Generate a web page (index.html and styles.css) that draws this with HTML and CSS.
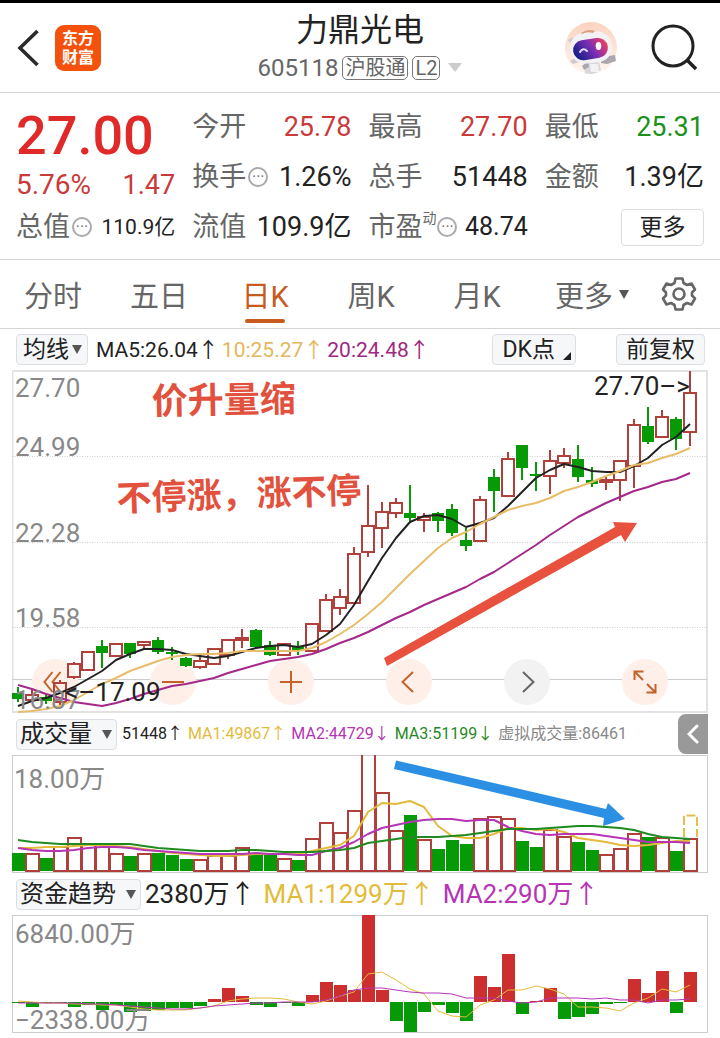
FILE: index.html
```html
<!DOCTYPE html>
<html lang="zh-CN">
<head>
<meta charset="utf-8">
<meta name="viewport" content="width=device-width, initial-scale=1">
<title>力鼎光电 605118</title>
<link rel="stylesheet" href="styles.css">
</head>
<body>
<header class="top">
  <div class="top-left">
    <button class="bare" aria-label="返回"><svg width="24" height="38" viewBox="0 0 24 38"><path d="M21.500 2 4 19l17.500 17" fill="none" stroke="#2b2b2b" stroke-width="3.600"/></svg></button>
    <a class="logo" href="#"><span>东方</span><span>财富</span></a>
  </div>
  <div class="top-title">
    <h1>力鼎光电</h1>
    <div class="code"><span>605118</span><span class="tag">沪股通</span><span class="tag">L2</span><i class="caret caret-light"></i></div>
  </div>
  <div class="top-right">
    <button class="bare" aria-label="智能助手">
      <svg width="54" height="54" viewBox="0 0 54 54">
        <defs>
          <linearGradient id="visor" x1="0" x2="1" y1="0.300" y2="0"><stop offset="0" stop-color="#20208c"/><stop offset=".45" stop-color="#7b2fb4"/><stop offset=".8" stop-color="#d83a72"/><stop offset="1" stop-color="#e8583f"/></linearGradient>
          <linearGradient id="halo" x1="0" x2="0" y1="0" y2="1"><stop offset="0" stop-color="#fbd3bf"/><stop offset="1" stop-color="#fff6f1"/></linearGradient>
        </defs>
        <circle cx="27" cy="27" r="26" fill="url(#halo)"/>
        <path d="M20 41q7-4 15 0l2 8q-8 6-16 3z" fill="#d9d7dc"/>
        <path d="M18 45l6-5 1 6-5 3zM37 39l8-4 6-1 1 6-9 3-6-1z" fill="#aaa8ae"/>
        <path d="M26 43h8l1 8h-8z" fill="#f2f1f3"/>
        <path d="M4 19l5-3-1 8zM6 40l6-4 3 5-6 2z" fill="#cfccd1"/>
        <rect x="6" y="11" width="42" height="31" rx="15" fill="#f3f1f4" transform="rotate(-7 27 27)"/>
        <path d="M17 12q7-5 14-2l-2 2q-6-2-11 1z" fill="#d9a07e"/>
        <rect x="9" y="18" width="35" height="20" rx="10" fill="url(#visor)" transform="rotate(-9 27 28)"/>
        <path d="M16 31q3-5 7-1" fill="none" stroke="#e9dcff" stroke-width="2" stroke-linecap="round"/>
        <ellipse cx="34.500" cy="25" rx="2.800" ry="4" fill="#fff"/>
      </svg>
    </button>
    <button class="bare" aria-label="搜索"><svg width="48" height="48" viewBox="0 0 48 48"><g fill="none" stroke="#222" stroke-width="3"><circle cx="22" cy="22" r="20"/><path d="M36 36l9 9" stroke-width="3.500"/></g></svg></button>
  </div>
</header>

<section class="quote">
  <div class="quote-main">
    <strong class="price">27.00</strong>
    <div class="change"><span class="percent">5.76%</span><span>1.47</span></div>
    <div class="item"><span class="name">总值<i class="info">···</i></span><span class="small">110.9亿</span></div>
  </div>
  <div class="quote-grid">
    <div class="item"><span class="name">今开</span><span class="up">25.78</span></div>
    <div class="item"><span class="name">最高</span><span class="up">27.70</span></div>
    <div class="item"><span class="name">最低</span><span class="down">25.31</span></div>
    <div class="item"><span class="name">换手<i class="info">···</i></span><span>1.26%</span></div>
    <div class="item"><span class="name">总手</span><span>51448</span></div>
    <div class="item"><span class="name">金额</span><span>1.39亿</span></div>
    <div class="item"><span class="name">流值</span><span>109.9亿</span></div>
    <div class="item"><span class="name">市盈<sup>动</sup><i class="info">···</i></span><span class="mid">48.74</span></div>
    <div class="item item-end"><button class="more">更多</button></div>
  </div>
</section>

<nav class="tabs">
  <button>分时</button>
  <button>五日</button>
  <button class="on">日K</button>
  <button>周K</button>
  <button>月K</button>
  <button class="tab-more">更多<i class="caret caret-small"></i></button>
  <button class="tab-gear" aria-label="设置"><svg width="36" height="36" viewBox="0 0 36 36"><g fill="none" stroke="#666" stroke-width="2.600" stroke-linejoin="round"><path d="M14.500 2.500h7l1 4.500 3.500 2 4.500-1.500 3.500 6-3 3v3l3 3-3.500 6-4.500-1.500-3.500 2-1 4.500h-7l-1-4.500-3.500-2L5.500 28.500 2 22.500l3-3v-3l-3-3 3.500-6L10 9l3.500-2z"/><circle cx="18" cy="18" r="5.500"/></g></svg></button>
</nav>

<main class="charts">
  <div class="bar bar-first">
    <button class="chip">均线<i class="caret caret-small"></i></button>
    <div class="values ma">
      <span>MA5:26.04↑</span><span class="gold">10:25.27↑</span><span class="plum">20:24.48↑</span>
    </div>
    <div class="bar-right">
      <button class="chip chip-dk">DK点<i class="corner"></i></button>
      <button class="chip">前复权</button>
    </div>
  </div>

  <div class="kline">
    <svg class="layer" viewBox="12 370 696 343" aria-hidden="true">
      <rect x="12.500" y="371" width="694.500" height="341" fill="none" stroke="#e2e2e2" stroke-width="2"/>
      <path d="M12 456.500H707M12 542.500H707M12 627.500H707" stroke="#ccc" stroke-dasharray="1 1.500"/>
      <path d="M12 679.500H707" stroke="#ccc"/>
    </svg>
    <div class="tools">
      <button aria-label="最左"><svg viewBox="0 0 46 46"><path d="M20.500 13l-8 10 8 10M28.500 13l-8 10 8 10"/></svg></button>
      <button aria-label="缩小"><svg viewBox="0 0 46 46"><path d="M12 23h22"/></svg></button>
      <button aria-label="放大"><svg viewBox="0 0 46 46"><path d="M12 23h22M23 12v22"/></svg></button>
      <button aria-label="向左"><svg viewBox="0 0 46 46"><path d="M27 13L16.500 23 27 33"/></svg></button>
      <button class="off" aria-label="向右"><svg viewBox="0 0 46 46"><path d="M19 13l10.500 10L19 33"/></svg></button>
      <button aria-label="全屏"><svg viewBox="0 0 46 46"><path d="M12.500 21v-8.500h9M13 13l8 8M33.500 25v8.500h-9M33 33l-8-8"/></svg></button>
    </div>
    <svg class="layer layer-front" viewBox="12 370 696 343">
      <g id="candles"></g>
      <g class="scale">
        <text x="15" y="397">27.70</text>
        <text x="15" y="456">24.99</text>
        <text x="15" y="542">22.28</text>
        <text x="15" y="627">19.58</text>
        <text x="15" y="709">16.87</text>
      </g>
      <g class="mark">
        <text x="594" y="395">27.70–&gt;</text>
        <text x="65" y="701">&lt;–17.09</text>
      </g>
      <path d="M384 658L615 527l-2-5 24 1-12 19-4-7L387 666z" fill="#e8513d"/>
      <g class="note">
        <text transform="translate(152 414) rotate(-1)">价升量缩</text>
        <text transform="translate(117 511) rotate(-2)">不停涨，涨不停</text>
      </g>
    </svg>
  </div>

  <div class="bar">
    <button class="chip chip-flat">成交量<i class="caret caret-small"></i></button>
    <div class="values narrow">
      <span>51448↑</span><span class="yellow">MA1:49867↑</span><span class="violet">MA2:44729↓</span><span class="green">MA3:51199↓</span><span class="gray">虚拟成交量:86461</span>
    </div>
    <button class="drawer" aria-label="展开"><svg width="12" height="20" viewBox="0 0 12 20"><path d="M10 2L2 10l8 8" fill="none" stroke="#fff" stroke-width="3" stroke-linecap="round"/></svg></button>
  </div>
  <svg class="pane" viewBox="12 755 696 118">
    <rect x="12.500" y="755.500" width="695" height="117" fill="#fff" stroke="#ccc"/>
    <g id="volume"></g>
    <g class="scale"><text x="14" y="788">18.00万</text></g>
    <path d="M684 837v-21.500h13V837" fill="none" stroke="#e2c04a" stroke-width="2" stroke-dasharray="9 3"/>
    <path d="M396 760.500L606 809l2-6 17 16-22 7 1-8-210-49z" fill="#2b8fe3"/>
  </svg>

  <div class="bar">
    <button class="chip chip-flat">资金趋势<i class="caret caret-small"></i></button>
    <div class="values large">
      <span>2380万↑</span><span class="yellow">MA1:1299万↑</span><span class="violet">MA2:290万↑</span>
    </div>
  </div>
  <svg class="pane" viewBox="12 915 696 118">
    <rect x="12.500" y="915.500" width="695" height="117" fill="#fff" stroke="#ccc"/>
    <g id="fund"></g>
    <g class="scale"><text x="15" y="943">6840.00万</text><text x="15" y="1029">−2338.00万</text></g>
  </svg>
</main>
<script src="charts.js"></script>
</body>
</html>
```
FILE: styles.css
```css
* { box-sizing: border-box; }
body {
  margin: 0;
  background: #fff;
  color: #222;
  border-top: 3px solid #000;
  font-family: Roboto, "Noto Sans CJK SC", sans-serif;
}
button {
  font: inherit;
  color: inherit;
  background: none;
  border: 0;
  padding: 0;
  margin: 0;
}
svg { display: block; }
i { font-style: normal; }

.top {
  display: grid;
  grid-template-columns: 1fr auto 1fr;
  align-items: center;
  height: 90px;
  padding: 0 16px;
  border-bottom: 1px solid #d4d4d4;
}
.top-left, .top-right { display: flex; align-items: center; }
.top-left { gap: 15px; }
.top-right { justify-content: flex-end; gap: 33px; padding-right: 5px; }
.logo {
  display: flex;
  flex-direction: column;
  align-items: center;
  justify-content: center;
  width: 46px;
  height: 46px;
  border-radius: 9px;
  background: #f4520c;
  color: #fff;
  font-size: 16px;
  line-height: 19px;
  font-weight: 700;
  text-decoration: none;
}
.top-title { text-align: center; }
h1 { margin: 0; font-size: 32px; line-height: 40px; font-weight: 400; }
.code {
  display: flex;
  align-items: center;
  justify-content: center;
  gap: 4px;
  font-size: 24px;
  line-height: 36px;
  color: #666;
}
.tag {
  border: 1px solid #777;
  border-radius: 5px;
  padding: 0 2px;
  font-size: 20px;
  line-height: 22px;
}
.caret {
  display: inline-block;
  border: solid transparent;
  border-width: 9px 7px 0;
  border-top-color: #666;
}
.caret-light { border-top-color: #ccc; margin-left: 4px; }
.caret-small { border-width: 9px 5px 0; border-top-color: #555; }

.quote {
  display: grid;
  grid-template-columns: minmax(0, 159fr) minmax(0, 511fr);
  gap: 17px;
  padding: 9px 16px 7px;
  border-bottom: 1px solid #d4d4d4;
  font-size: 27px;
  line-height: 32px;
}
.quote-grid {
  display: grid;
  grid-template-columns: repeat(3, minmax(0, 1fr));
  grid-auto-rows: 50px;
  column-gap: 17px;
}
.price { display: block; height: 64px; font-size: 54px; line-height: 68px; font-weight: 500; color: #e02a2a; }
.change { display: flex; justify-content: space-between; height: 36px; line-height: 38px; color: #c93a3a; }
.percent { font-size: 28px; }
.item { display: flex; align-items: center; justify-content: space-between; height: 50px; white-space: nowrap; }
.item-end { justify-content: flex-end; }
.name { display: flex; align-items: center; color: #666; }
.name sup { align-self: flex-start; font-size: 14px; line-height: 14px; }
.info {
  width: 20px;
  height: 20px;
  margin-left: 2px;
  border: 2px solid #aaa;
  border-radius: 50%;
  font-size: 16px;
  line-height: 16px;
  text-align: center;
  color: #777;
}
.name sup + .info { margin-left: 1px; }
.small { font-size: 21px; }
.mid { font-size: 25px; }
.up { color: #c93a3a; }
.down { color: #1b911b; }
.more { width: 83px; height: 37px; border: 1px solid #ddd; border-radius: 4px; font-size: 23px; line-height: 33px; }

.tabs {
  display: grid;
  grid-template-columns: repeat(5, 106fr) 124fr 50fr;
  height: 69px;
  padding-right: 16px;
  border-bottom: 1px solid #d4d4d4;
  font-size: 29px;
  color: #666;
}
.tabs button { position: relative; display: flex; align-items: center; justify-content: center; white-space: nowrap; }
.tabs .on { color: #c75b1e; }
.on::after {
  content: "";
  position: absolute;
  bottom: 5px;
  width: 40px;
  height: 4px;
  border-radius: 2px;
  background: #c75b1e;
}
.tab-more { gap: 6px; }

.charts { padding: 0 12px; }
.bar { display: flex; align-items: center; height: 42px; padding-left: 4px; white-space: nowrap; }
.bar-first { height: 41px; }
.chip {
  position: relative;
  display: flex;
  align-items: center;
  gap: 3px;
  height: 31px;
  padding: 0 5px 0 6px;
  border: 1px solid #dcdfe3;
  border-radius: 4px;
  background: #f6f7f9;
  font-size: 23px;
  line-height: 28px;
}
.chip-flat { gap: 10px; padding: 0 4px 0 3px; font-size: 24px; }
.bar-right { display: flex; gap: 40px; margin-left: auto; padding-right: 3px; }
.bar-right .chip { padding: 0 9px; }
.bar-right .chip-dk { padding-right: 20px; }
.corner {
  position: absolute;
  right: 4px;
  bottom: 4px;
  width: 8px;
  height: 8px;
  background: #222;
  clip-path: polygon(100% 0, 100% 100%, 0 100%);
}
.values { display: flex; line-height: 28px; }
.ma { margin-left: 8px; gap: 3px; font-size: 21px; }
.narrow { margin-left: 5px; gap: 5px; font-size: 16px; }
.large { margin-left: 4px; gap: 8px; font-size: 26px; }
.gold { color: #e3b75c; }
.plum { color: #a0287f; }
.yellow { color: #e3bb3a; }
.violet { color: #b535b5; }
.green { color: #1f8a1f; }
.gray { color: #888; }
.drawer {
  display: flex;
  align-items: center;
  justify-content: center;
  flex: none;
  width: 30px;
  height: 40px;
  margin-left: auto;
  border-radius: 8px 0 0 8px;
  background: #999;
}

.kline { position: relative; }
.layer, .pane { width: 100%; height: auto; }
.layer-front { position: absolute; inset: 0; pointer-events: none; }
.tools {
  position: absolute;
  left: 20px;
  right: 40px;
  bottom: 8px;
  display: flex;
  justify-content: space-between;
}
.tools button { width: 46px; height: 46px; border-radius: 50%; background: #feefe8; }
.tools .off { background: #f2f2f2; }
.tools path { fill: none; stroke: #c4622a; stroke-width: 2; }
.tools .off path { stroke: #666; }
.scale text { font-size: 26px; fill: #888; }
.mark text { font-size: 26px; fill: #222; }
.note text { font-size: 36px; font-weight: 700; fill: #e2513d; }
.note text + text { font-size: 35px; }
.rise { fill: none; stroke: #b0403c; stroke-width: 2; }
.rise-fill { fill: #cc2f2d; }
.fall { fill: #069a06; stroke: none; }
.wick-rise { stroke: #b0403c; stroke-width: 2; }
.wick-fall { stroke: #069a06; stroke-width: 2; }
.line { fill: none; stroke-width: 2; stroke-linejoin: round; }
.line.thin { stroke-width: 1; }
```
FILE: charts.js
```js
const NS = "http://www.w3.org/2000/svg";
const STEP = 14;
const FIRST = 18;

function add(parent, name, attrs) {
  const el = document.createElementNS(NS, name);
  for (const key in attrs) el.setAttribute(key, attrs[key]);
  parent.appendChild(el);
}

function line(parent, ys, color, extra = "") {
  const points = ys.map((y, i) => `${FIRST + i * STEP},${y}`).join(" ");
  add(parent, "polyline", { points, stroke: color, class: "line " + extra });
}

// Each candle: direction, high, body top, body bottom, low.
const candles = `g 687 693 699 702|r 690 695 700 702|g 695 697 701 704|r 680 683 702 705|r 662 664 677 679|r 652 652 670 670|g 640 646 653 668|r 643 644 656 657|g 643 643 654 658|r 641 642 645 650|g 637 640 652 654|g 647 652 654 660|g 657 658 666 667|r 656 661 667 669|r 648 649 664 664|r 639 640 655 659|r 629 638 640 648|g 629 630 647 649|g 641 645 655 656|r 643 644 655 655|g 641 646 650 655|r 624 624 651 651|r 594 600 631 631|r 589 597 608 615|r 547 554 603 603|r 485 526 552 557|r 502 512 528 548|r 498 503 513 518|g 485 513 518 523|r 513 517 520 532|g 512 513 521 532|g 504 509 533 536|g 528 540 546 551|r 496 500 541 541|g 469 477 491 512|r 452 459 496 496|g 445 445 468 480|g 462 474 476 491|r 450 461 476 494|r 448 456 463 468|g 445 459 477 482|g 467 480 484 487|r 477 480 482 490|r 460 461 480 501|r 419 425 466 488|g 407 426 442 444|r 410 417 437 437|g 417 419 439 450|r 371 393 432 446`
  .split("|")
  .map((row) => row.split(" "));

const k = document.getElementById("candles");
candles.forEach(([dir, ...v], i) => {
  const [high, top, bottom, low] = v.map(Number);
  const x = FIRST + i * STEP;
  if (dir === "g") {
    add(k, "path", { d: `M${x} ${high}V${low}`, class: "wick-fall" });
    add(k, "rect", { x: x - 6, y: top, width: 12, height: bottom - top, class: "fall" });
  } else {
    add(k, "path", { d: `M${x} ${high}V${top}M${x} ${bottom}V${low}`, class: "wick-rise" });
    add(k, "rect", { x: x - 6, y: top, width: 12, height: bottom - top, class: "rise" });
  }
});
line(k, [685, 689, 694, 698, 702, 704, 706, 703, 699, 694, 690, 686, 684, 681, 678, 673, 669, 665, 661, 659, 657, 654, 649, 643, 638, 632, 625, 618, 612, 605, 599, 593, 587, 579, 572, 563, 554, 545, 535, 526, 517, 510, 503, 497, 491, 487, 482, 479, 473], "#a5288a");
line(k, [706, 701, 698, 693, 687, 679, 671, 660, 654, 649, 649, 650, 654, 656, 658, 656, 652, 648, 646, 645, 647, 644, 635, 624, 605, 581, 558, 538, 522, 516, 515, 519, 527, 523, 518, 506, 492, 478, 470, 464, 467, 471, 472, 472, 466, 458, 445, 437, 424], "#222");
line(k, [712, 711, 709, 706, 700, 692, 684, 678, 671, 666, 661, 657, 655, 654, 654, 653, 651, 651, 651, 651, 651, 648, 642, 634, 625, 614, 602, 588, 574, 561, 548, 538, 532, 524, 517, 510, 506, 503, 498, 491, 487, 482, 476, 471, 465, 463, 458, 454, 448], "#e8bd6a");

// Each volume bar: direction followed by the top edge.
const volume = "g853 r854 g858 r847 r838 r845 r845 r854 g856 r854 g853 g855 g859 r860 r856 r856 r848 g854 g854 r859 g860 r839 r823 r833 r811 r740 r793 r831 g815 r840 g849 g840 g844 r819 r817 r819 g841 g847 r830 r837 g842 g850 r855 r849 r834 g837 r838 g851 r839".split(" ");
const vol = document.getElementById("volume");
volume.forEach((bar, i) => {
  const x = FIRST + i * STEP;
  const top = Number(bar.slice(1));
  add(vol, "rect", {
    x: x - 6,
    y: top,
    width: 13,
    height: 871 - top,
    class: bar[0] === "g" ? "fall" : "rise",
  });
});
line(vol, [848, 848, 847, 847, 846, 845, 845, 846, 847, 849, 851, 853, 854, 855, 856, 856, 855, 854, 854, 854, 854, 851, 848, 845, 836, 812, 803, 804, 801, 807, 826, 836, 838, 838, 834, 828, 828, 830, 829, 832, 838, 840, 842, 845, 846, 845, 843, 841, 841], "#e3bb3a");
line(vol, [848, 850, 851, 851, 850, 848, 847, 847, 848, 850, 851, 852, 853, 854, 854, 854, 854, 853, 854, 854, 855, 855, 851, 848, 842, 834, 828, 825, 822, 820, 819, 819, 821, 820, 820, 827, 831, 834, 835, 834, 834, 834, 836, 838, 840, 842, 842, 842, 843], "#b535b5");
line(vol, [840, 842, 843, 844, 844, 844, 844, 844, 844, 846, 848, 849, 850, 851, 851, 851, 850, 850, 851, 852, 852, 852, 851, 850, 848, 843, 841, 839, 837, 837, 837, 836, 835, 833, 831, 829, 829, 829, 828, 827, 826, 826, 827, 828, 830, 834, 837, 838, 839], "#1f8a1f");

const ZERO = 1002;
const flow = [-1, -5, -1, -1, -5, -3, -8, -3, -10, -9, -8, -6, -6, -4, 3, 14, 6, -3, -5, -1, -4, 7, 20, 17, 12, 87, 12, -19, -30, -10, -3, -11, -19, 26, 15, 48, -12, 1, 14, -17, -15, -12, -2, -1, 23, 9, 31, -11, 30];
const fund = document.getElementById("fund");
flow.forEach((value, i) => {
  add(fund, "rect", {
    x: FIRST + i * STEP - 6,
    y: value > 0 ? ZERO - value : ZERO,
    width: 13,
    height: Math.abs(value),
    class: value > 0 ? "rise-fill" : "fall",
  });
});
line(fund, [1001, 1002, 1003, 1003, 1004, 1004, 1005, 1005, 1007, 1009, 1010, 1010, 1010, 1008, 1006, 1001, 999, 998, 998, 999, 1002, 1004, 1001, 996, 992, 974, 972, 980, 989, 994, 1011, 1016, 1017, 1005, 1000, 990, 990, 986, 989, 994, 1007, 1007, 1008, 1011, 1003, 998, 989, 992, 985], "#e3bb3a", "thin");
line(fund, [1003, 1003, 1003, 1003, 1003, 1004, 1004, 1005, 1006, 1007, 1008, 1009, 1009, 1008, 1006, 1005, 1004, 1003, 1003, 1002, 1002, 1002, 1000, 996, 990, 988, 988, 990, 992, 993, 993, 994, 998, 998, 998, 1001, 1003, 1002, 998, 998, 998, 999, 998, 1000, 1000, 1003, 1000, 1000, 999], "#b535b5", "thin");
```
